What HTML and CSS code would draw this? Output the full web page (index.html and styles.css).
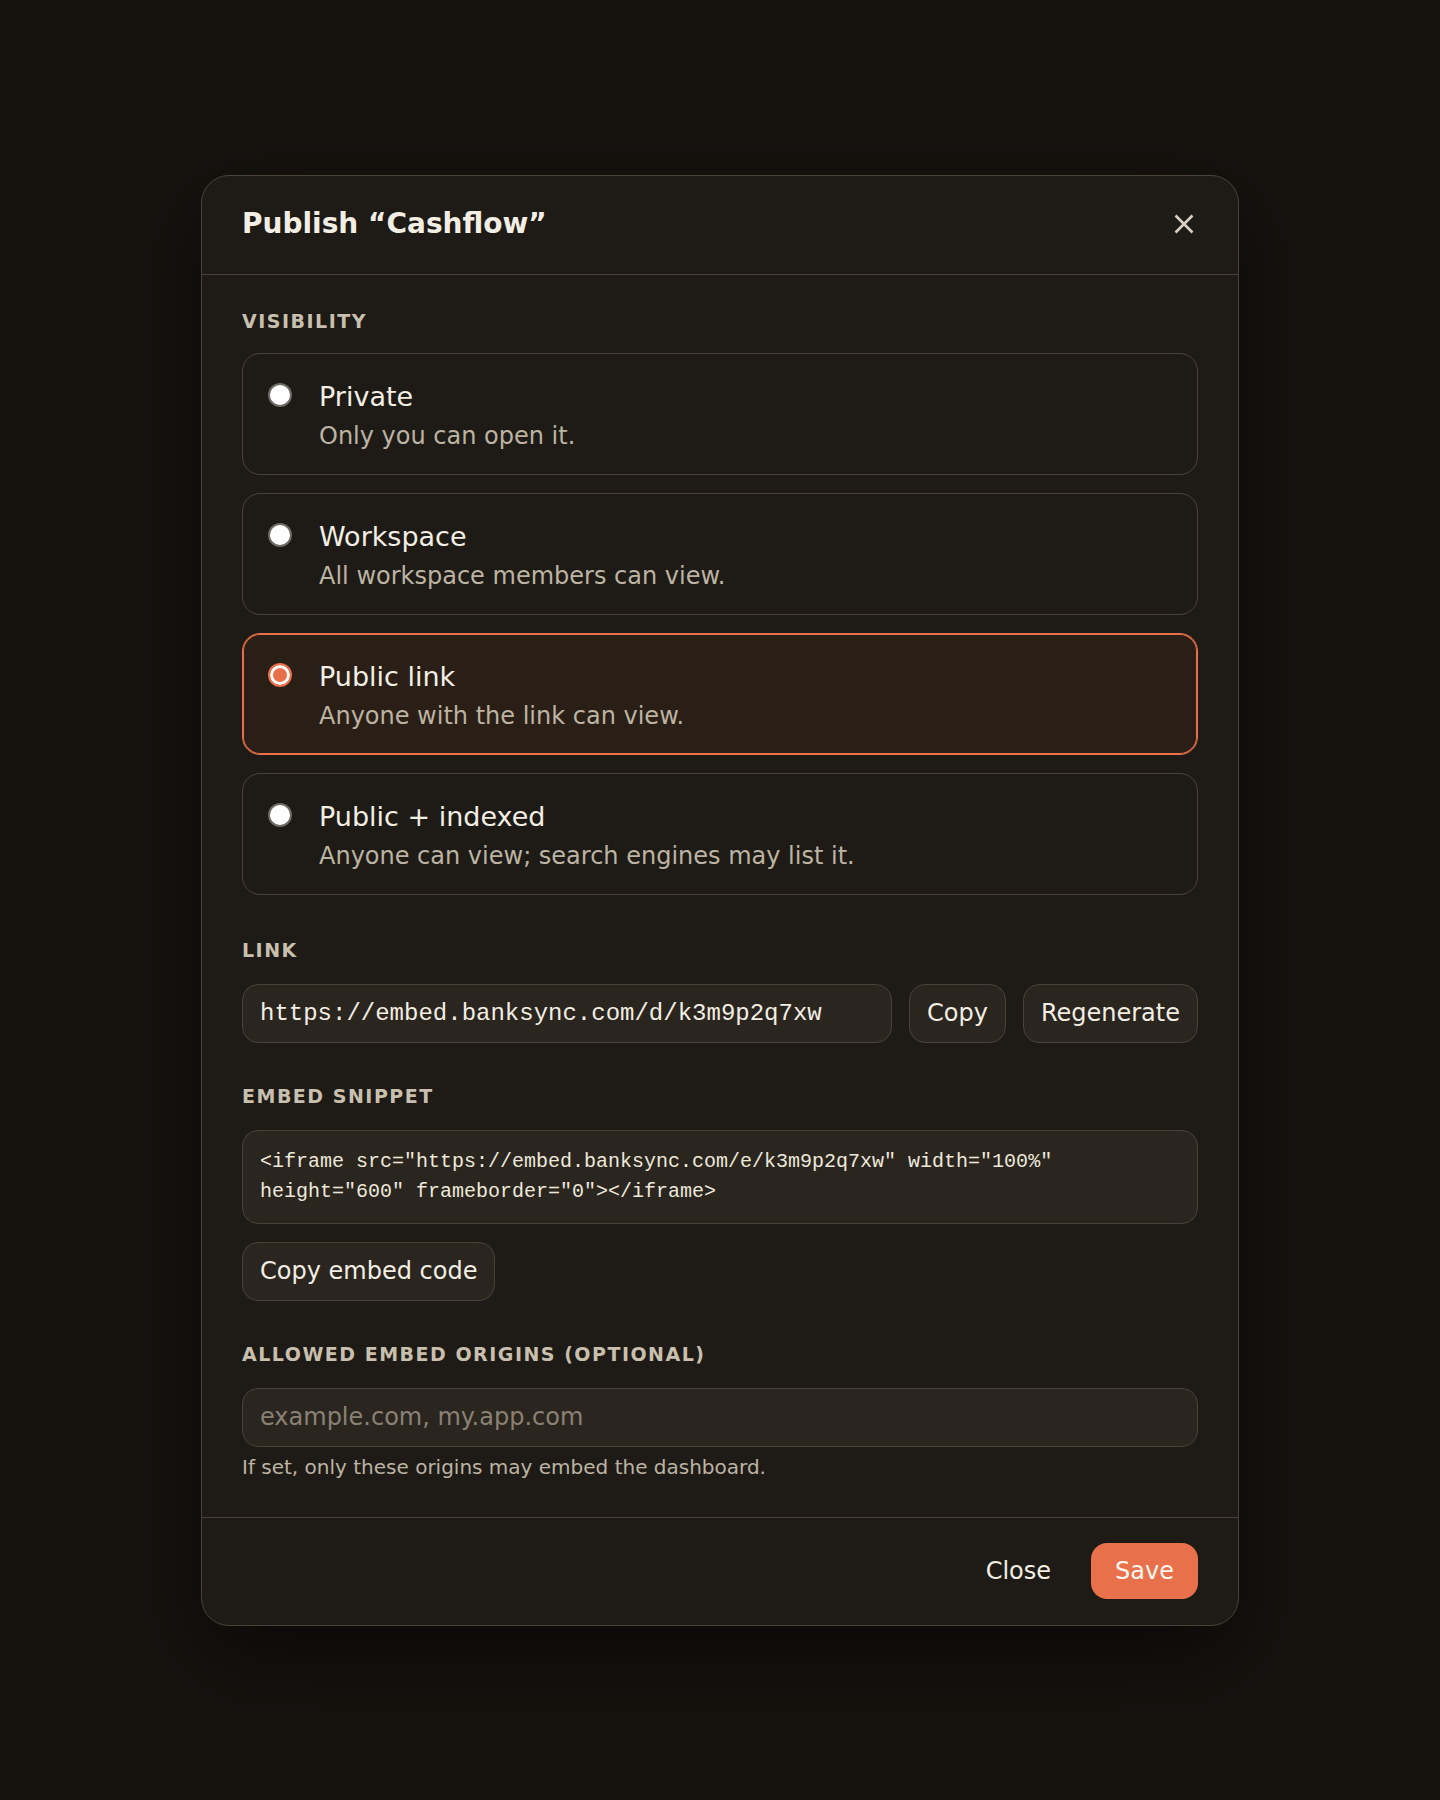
FILE: index.html
```html
<!DOCTYPE html>
<html lang="en">
<head>
    <meta charset="UTF-8">
    <title>Publish “Cashflow”</title>
    <link rel="stylesheet" href="styles.css">
</head>
<body>
<div class="backdrop">
    <div class="dialog" role="dialog" aria-labelledby="dialog-title">
        <div class="dialog-head">
            <h2 id="dialog-title">Publish “Cashflow”</h2>
            <button class="icon-btn" type="button" aria-label="Close">
                <svg width="20" height="20" viewBox="0 0 20 20">
                    <path d="M1.5 1.5 L18.5 18.5 M18.5 1.5 L1.5 18.5" stroke="currentColor" stroke-width="2.6" stroke-linecap="butt"/>
                </svg>
            </button>
        </div>

        <div class="dialog-body">
            <!-- who can see the dashboard -->
            <section class="field">
                <div class="field-label">Visibility</div>
                <div class="options">
                    <label class="option">
                        <span class="radio"></span>
                        <span class="option-text">
                            <span class="option-title">Private</span>
                            <span class="option-desc">Only you can open it.</span>
                        </span>
                    </label>
                    <label class="option">
                        <span class="radio"></span>
                        <span class="option-text">
                            <span class="option-title">Workspace</span>
                            <span class="option-desc">All workspace members can view.</span>
                        </span>
                    </label>
                    <label class="option selected">
                        <span class="radio"></span>
                        <span class="option-text">
                            <span class="option-title">Public link</span>
                            <span class="option-desc">Anyone with the link can view.</span>
                        </span>
                    </label>
                    <label class="option">
                        <span class="radio"></span>
                        <span class="option-text">
                            <span class="option-title">Public + indexed</span>
                            <span class="option-desc">Anyone can view; search engines may list it.</span>
                        </span>
                    </label>
                </div>
            </section>

            <section class="field">
                <div class="field-label">Link</div>
                <div class="link-row">
                    <input class="text-input mono" type="text" value="https://embed.banksync.com/d/k3m9p2q7xw" readonly>
                    <button class="btn" type="button">Copy</button>
                    <button class="btn" type="button">Regenerate</button>
                </div>
            </section>

            <section class="field">
                <div class="field-label">Embed snippet</div>
                <pre class="snippet">&lt;iframe src="https://embed.banksync.com/e/k3m9p2q7xw" width="100%" height="600" frameborder="0"&gt;&lt;/iframe&gt;</pre>
                <div class="snippet-actions">
                    <button class="btn" type="button">Copy embed code</button>
                </div>
            </section>

            <section class="field">
                <div class="field-label">Allowed embed origins (optional)</div>
                <input class="text-input" type="text" placeholder="example.com, my.app.com">
                <p class="hint">If set, only these origins may embed the dashboard.</p>
            </section>
        </div>

        <div class="dialog-foot">
            <button class="btn ghost" type="button">Close</button>
            <button class="btn primary" type="button">Save</button>
        </div>
    </div>
</div>
</body>
</html>
```

FILE: styles.css
```css
body,h2,p,pre{margin:0;padding:0;}
body{
    background: #16130f;
    color: #f3eee3;
    font-family: "DejaVu Sans", "Noto Sans", sans-serif;
}
button,input{font-family: inherit;}

.backdrop{
    min-height: 100vh;
    display: flex;
    align-items: center;
    justify-content: center;
}
.dialog{
    width: 1038px;
    box-sizing: border-box;
    background: #1e1b16;
    border: solid 1px #4a4236;
    border-radius: 28px;
    box-shadow: 0 30px 90px rgba(0,0,0,.55);
}

/* header */
.dialog-head{
    display: flex;
    align-items: center;
    justify-content: space-between;
    padding: 31px 40px 33px;
    border-bottom: solid 1px #4a4236;
}
.dialog-head h2{
    font-size: 28px;
    line-height: 34px;
    font-weight: bold;
    color: #f3eee3;
}
.icon-btn{
    width: 28px;
    height: 28px;
    padding: 0;
    border: none;
    background: none;
    color: #d9d0c1;
    display: flex;
    align-items: center;
    justify-content: center;
    cursor: pointer;
}

/* body */
.dialog-body{
    padding: 34px 40px 36px;
    display: flex;
    flex-direction: column;
    gap: 41px;
}
.field-label{
    font-size: 19px;
    line-height: 24px;
    font-weight: bold;
    letter-spacing: 1.5px;
    text-transform: uppercase;
    color: #c9bfae;
    margin-bottom: 22px;
}
.field:first-child{margin-bottom: 2px;}
.field:first-child .field-label{margin-bottom: 20px;}

.options{
    display: flex;
    flex-direction: column;
    gap: 18px;
}
.option{
    display: flex;
    align-items: flex-start;
    gap: 27px;
    padding: 24px 25px 21px;
    border: solid 1px #4a4236;
    border-radius: 18px;
    cursor: pointer;
}
.option.selected{
    border-color: #e8704a;
    box-shadow: inset 0 0 0 1px #e8704a;
    background: #2a1f17;
}
.radio{
    flex: none;
    width: 24px;
    height: 24px;
    box-sizing: border-box;
    margin-top: 5px;
    border: solid 2px #6e6a64;
    border-radius: 50%;
    background: #fff;
}
.option.selected .radio{
    border-color: #e8704a;
    background: #e8704a;
    box-shadow: inset 0 0 0 3px #fff;
}
.option-text{
    display: flex;
    flex-direction: column;
}
.option-title{
    font-size: 27px;
    line-height: 38px;
    color: #f3eee3;
}
.option-desc{
    margin-top: 3px;
    font-size: 24px;
    line-height: 34px;
    color: #bdb3a3;
}

/* inputs and buttons */
.link-row{
    display: flex;
    gap: 17px;
}
.text-input{
    display: block;
    width: 100%;
    height: 59px;
    box-sizing: border-box;
    padding: 0 17px;
    font-size: 24px;
    color: #f3eee3;
    background: #2a251f;
    border: solid 1px #4a4236;
    border-radius: 16px;
    outline: none;
}
.link-row .text-input{
    flex: 1;
    width: auto;
    min-width: 0;
}
.text-input::placeholder{color: #8a8174;}
.mono{font-family: "Liberation Mono", "DejaVu Sans Mono", monospace;}

.btn{
    height: 59px;
    box-sizing: border-box;
    padding: 0 17px;
    font-size: 24px;
    color: #f3eee3;
    background: #2a251f;
    border: solid 1px #4a4236;
    border-radius: 16px;
    cursor: pointer;
    white-space: nowrap;
}
.btn.ghost{
    background: none;
    border-color: transparent;
}
.btn.primary{
    height: 56px;
    padding: 0 24px;
    background: #e8704a;
    border: none;
    color: #fff6ef;
    border-radius: 16px;
}

.snippet{
    padding: 16px 17px;
    font-family: "Liberation Mono", "DejaVu Sans Mono", monospace;
    font-size: 20px;
    line-height: 30px;
    white-space: pre-wrap;
    color: #eee8dc;
    background: #2a251f;
    border: solid 1px #4a4236;
    border-radius: 16px;
}
.snippet-actions{margin-top: 18px;}

.hint{
    margin-top: 6px;
    font-size: 20px;
    line-height: 28px;
    color: #bdb3a3;
}

/* footer */
.dialog-foot{
    display: flex;
    justify-content: flex-end;
    align-items: center;
    gap: 22px;
    padding: 24px 40px;
    border-top: solid 1px #4a4236;
}
```
